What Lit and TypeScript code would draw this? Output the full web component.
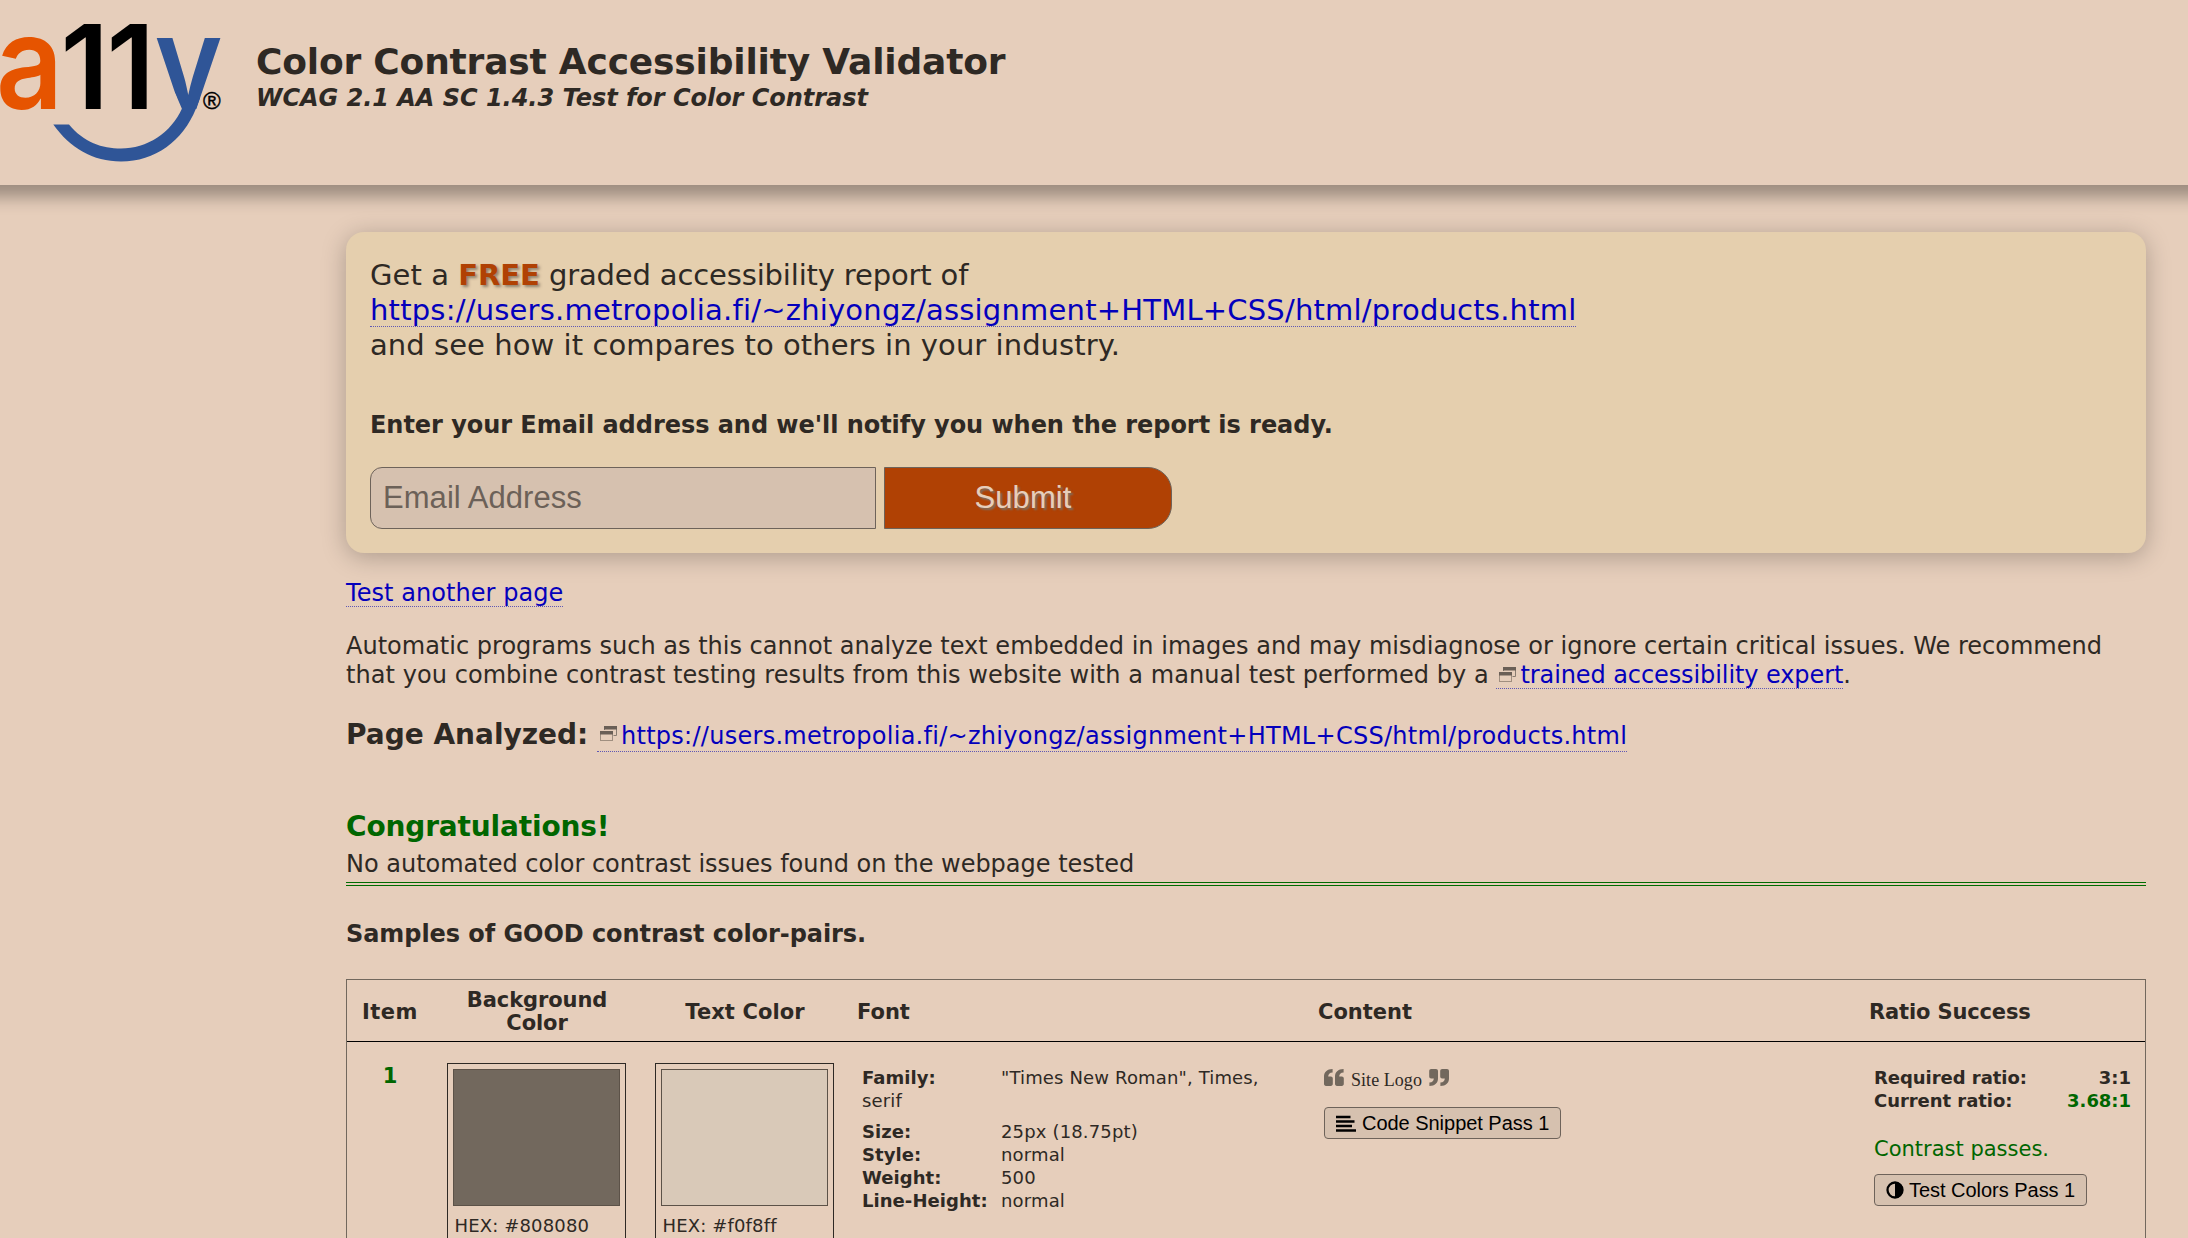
import { LitElement, html, css, svg } from "lit";
import { customElement } from "lit/decorators.js";

const PAGE_URL = "https://users.metropolia.fi/~zhiyongz/assignment+HTML+CSS/html/products.html";

const quoteMark = svg`<path d="M8.600 0v3.400C5.600 3.600 4.200 5 4.200 7.400h2.600c1.200 0 2 .8 2 2v5.400c0 1.300-.8 2.200-2 2.200H2c-1.200 0-2-.9-2-2.200V7.500C0 3 3 .2 8.600 0z"/>`;
const quoteIcon = (flip: boolean) => html`<svg class="quote" viewBox="0 0 20 17" aria-hidden="true">
  <g transform=${flip ? "rotate(180 10 8.5)" : ""}>${quoteMark}<g transform="translate(11 0)">${quoteMark}</g></g>
</svg>`;

const windowIcon = html`<svg class="win" viewBox="0 0 17 17" aria-hidden="true">
  <path d="M4.500 5V1.500h12v9h-3" fill="none" stroke="#897c70"/>
  <rect x="4" y="1" width="13" height="3.500" fill="#6a5f56"/>
  <rect x="0.500" y="6.500" width="12" height="9" fill="#e6cebb" stroke="#a08f80"/>
  <rect x="0" y="6" width="13" height="3.500" fill="#6a5f56"/>
</svg>`;

const logo = html`<svg class="logo" viewBox="0 0 222 164" role="img" aria-label="a11y">
  <defs><clipPath id="stem"><path d="M140 0H222V109H182L176 95L140 30Z"/></clipPath></defs>
  <text class="lg a" transform="translate(-4 108.500) scale(.89 1)">a</text>
  <text class="lg one" transform="translate(60.500 108.500) scale(.98 1)">1</text>
  <text class="lg one" transform="translate(106.500 108.500) scale(.98 1)">1</text>
  <g clip-path="url(#stem)"><text class="lg y" transform="translate(154.500 108.500) scale(.89 1)">y</text></g>
  <path d="M53.300 124.500H69C84 142.500 102 148.500 121 148.500C147 148.500 171 133 182 108.500L186 98H200L196 108.500C183 141 155 161.500 121 161.500C93 161.500 70 148 53.300 124.500Z" fill="#2f5597"/>
  <text class="reg" x="203" y="108.500">®</text>
</svg>`;

interface FontFact { label: string; value: string; gap?: boolean }
const FACTS: FontFact[] = [
  { label: "Family:", value: '"Times New Roman", Times, serif', gap: true },
  { label: "Size:", value: "25px (18.75pt)" },
  { label: "Style:", value: "normal" },
  { label: "Weight:", value: "500" },
  { label: "Line-Height:", value: "normal" },
];

@customElement("app-root")
export class AppRoot extends LitElement {
  static styles = css`
    :host { display: block; height: 1238px; overflow: hidden; background: #e6cebb; color: #2e2924;
      font: 24px/29px Verdana, "DejaVu Sans", sans-serif; }
    * { box-sizing: border-box; }
    p, h1, h2, h3 { margin: 0; font-size: inherit; font-weight: inherit; }
    a { color: #0400bc; text-decoration: none; display: inline-block; line-height: 26px;
      border-bottom: 1px dotted #5f58b4; white-space: nowrap; }
    header { display: flex; height: 185px; margin: 0 -30px; padding: 0 30px; box-shadow: 0 12px 16px rgba(0, 0, 0, .325); }
    .logo { width: 222px; height: 164px; flex: none; overflow: visible; }
    .lg { font-family: Inter, sans-serif; }
    .a { font-size: 131px; font-weight: 600; fill: #e65400; }
    .one { font-size: 117px; font-weight: 600; fill: #000; }
    .y { font-size: 130px; font-weight: 600; fill: #2f5597; }
    .reg { font: 24px "Liberation Sans", sans-serif; stroke: #000; stroke-width: .4px; }
    .titles { padding: 40px 0 0 34px; }
    h1 { font-size: 36px; font-weight: 700; line-height: 44px; letter-spacing: -.19px; }
    .sub { font-weight: 700; font-style: italic; letter-spacing: -.03px; }
    main { width: 1800px; margin: 47px 0 0 346px; }
    .card { height: 321px; padding: 26px 24px 23px; background: #e5cfae; border-radius: 18px;
      box-shadow: 0 4px 24px rgba(0, 0, 0, .25); }
    .offer { font-size: 29px; line-height: 35px; letter-spacing: .06px; }
    .offer a { line-height: 32px; letter-spacing: .21px; }
    .free { color: #b04104; letter-spacing: -.1px; text-shadow: 2px 2px 3px rgba(60, 50, 40, .5); }
    .graded { letter-spacing: -.15px; }
    .enter { margin-top: 48px; font-weight: 700; letter-spacing: -.045px; }
    .form { display: flex; gap: 8px; margin-top: 27px; }
    .email { width: 506px; height: 62px; padding: 0 13px 0 12px; border: 1px solid #6e635a; border-radius: 12px 0 0 12px;
      background: #d6c1af; font: 31px "Liberation Sans", Arial, sans-serif; letter-spacing: .05px; }
    .email::placeholder { color: #6c6158; opacity: 1; }
    .submit { width: 288px; height: 62px; padding: 0 10px 0 0; border: 1px solid #6e635a; border-radius: 0 24px 24px 0;
      background: #b04104; color: #e6cebb; font: 31px "Liberation Sans", Arial, sans-serif; letter-spacing: .1px;
      text-shadow: 2px 2px 2px #7d6e60; }
    .again { height: 29px; margin-top: 26px; letter-spacing: .06px; }
    .note { height: 58px; margin-top: 24px; letter-spacing: .01px; }
    .note a { letter-spacing: -.09px; }
    .note .win { vertical-align: 0; }
    .l2 { letter-spacing: .06px; }
    .analyzed { margin-top: 27px; line-height: 35px; white-space: nowrap; }
    .analyzed b { font-size: 28px; }
    .analyzed a { margin-left: 1px; line-height: 29px; letter-spacing: .275px; }
    .win { width: 17px; height: 17px; margin: 0 4px 0 3px; vertical-align: 2px; }
    .congrats { margin-top: 55px; font-size: 28px; line-height: 35px; font-weight: 700; color: #006600; letter-spacing: -.15px; }
    .none { margin-top: 6px; padding-bottom: 3px; border-bottom: 4px double #006b00; letter-spacing: -.01px; }
    .samples { margin-top: 34px; font-weight: 700; letter-spacing: -.06px; }
    .table { margin-top: 30px; border: 1px solid #72685d; }
    .row { display: grid; grid-template-columns: 86px 208px 208px 461px 551px 1fr; }
    .head { height: 62px; padding-top: 2px; align-items: center; border-bottom: 1px solid #000; font-size: 21px; font-weight: 700; line-height: 23px; }
    .c { text-align: center; }
    .head .l { padding-left: 8px; }
    .head .single { padding-top: 1px; }
    .item { letter-spacing: .5px; }
    .textcolor { letter-spacing: .1px; }
    .success { letter-spacing: -.15px; }
    .narrow { padding: 0 30px; letter-spacing: -.1px; }
    .body { height: 260px; font-size: 18px; line-height: 23px; }
    .num { padding-top: 23px; font-size: 21px; font-weight: 700; color: #006600; text-align: center; }
    .pair { margin: 21px 15px 0 14px; padding: 5px; border: 1px solid #2e2924; }
    .swatch { height: 137px; border: 1px solid #5c5248; }
    .dark { background: #72685d; }
    .light { background: #d9c9b8; }
    .hex { margin-top: 8px; padding-left: 1.5px; letter-spacing: .15px; }
    .facts { padding: 24px 0 0 13px; letter-spacing: .15px; }
    .fact { width: 410px; }
    .fact b { display: inline-block; width: 139px; letter-spacing: .05px; }
    .gap { margin-bottom: 8px; }
    .content { padding: 24px 0 0 14px; }
    .quoted { display: flex; align-items: flex-start; gap: 7px; height: 41px; padding-top: 3px; }
    .quote { width: 20px; height: 17px; fill: #72685d; }
    .site { font: 18px/22px "Liberation Serif", "Times New Roman", serif; letter-spacing: .05px; }
    .btn { display: flex; align-items: center; gap: 6px; height: 32px; padding: 0 11px; border: 1px solid #6e635a;
      border-radius: 4px; background: #d6c1af; color: #000; font: 20px "Liberation Sans", Arial, sans-serif; letter-spacing: -.03px; white-space: nowrap; }
    .snippet { width: 237px; }
    .test { width: 213px; margin-top: 12px; gap: 5px; }
    .ico20 { width: 20px; height: 17px; flex: none; }
    .ico18 { width: 18px; height: 18px; flex: none; }
    .ratio { padding: 24px 14px 0 13px; }
    .line { display: flex; justify-content: space-between; font-weight: 700; letter-spacing: -.04px; }
    .ok { color: #006600; }
    .passes { margin-top: 25px; font-size: 21px; line-height: 25px; color: #006600; }
  `;

  render() {
    return html`
      <header>
        ${logo}
        <div class="titles">
          <h1>Color Contrast Accessibility Validator</h1>
          <p class="sub">WCAG 2.1 AA SC 1.4.3 Test for Color Contrast</p>
        </div>
      </header>
      <main>
        <section class="card">
          <p class="offer">Get a <b class="free">FREE</b> <span class="graded">graded accessibility report of</span><br><a>${PAGE_URL}</a><br>and see how it compares to others in your industry.</p>
          <p class="enter">Enter your Email address and we'll notify you when the report is ready.</p>
          <div class="form">
            <input class="email" placeholder="Email Address">
            <button class="submit">Submit</button>
          </div>
        </section>
        <p class="again"><a>Test another page</a></p>
        <p class="note">Automatic programs such as this cannot analyze text embedded in images and may misdiagnose or ignore certain critical issues. We recommend<br><span class="l2">that you combine contrast testing results from this website with a manual test performed by a</span> <a>${windowIcon}trained accessibility expert</a>.</p>
        <p class="analyzed"><b>Page Analyzed:</b> <a>${windowIcon}${PAGE_URL}</a></p>
        <h2 class="congrats">Congratulations!</h2>
        <p class="none">No automated color contrast issues found on the webpage tested</p>
        <h3 class="samples">Samples of GOOD contrast color-pairs.</h3>
        <div class="table">
          <div class="row head">
            <div class="c single item">Item</div><div class="c narrow">Background Color</div><div class="c single textcolor">Text Color</div>
            <div class="l single">Font</div><div class="l single">Content</div><div class="l single success">Ratio Success</div>
          </div>
          <div class="row body">
            <div class="num">1</div>
            <div class="pair"><div class="swatch dark"></div><p class="hex">HEX: #808080</p></div>
            <div class="pair"><div class="swatch light"></div><p class="hex">HEX: #f0f8ff</p></div>
            <div class="facts">
              ${FACTS.map((f) => html`<p class="fact ${f.gap ? "gap" : ""}"><b>${f.label}</b>${f.value}</p>`)}
            </div>
            <div class="content">
              <div class="quoted">${quoteIcon(false)}<span class="site">Site Logo</span>${quoteIcon(true)}</div>
              <button class="btn snippet">
                <svg class="ico20" viewBox="0 0 20 17" aria-hidden="true"><path d="M0 2h14.500M0 6.500h18.500M0 11h16M0 15.500h20" stroke="#000" stroke-width="2.600"/></svg>
                <span>Code Snippet Pass 1</span>
              </button>
            </div>
            <div class="ratio">
              <div class="line"><span>Required ratio:</span><span>3:1</span></div>
              <div class="line"><span>Current ratio:</span><span class="ok">3.68:1</span></div>
              <p class="passes">Contrast passes.</p>
              <button class="btn test">
                <svg class="ico18" viewBox="0 0 18 18" aria-hidden="true"><circle cx="9" cy="9" r="7.500" fill="none" stroke="#000" stroke-width="2.300"/><path d="M9 1v16a8 8 0 0 0 0-16z"/></svg>
                <span>Test Colors Pass 1</span>
              </button>
            </div>
          </div>
        </div>
      </main>
    `;
  }
}
